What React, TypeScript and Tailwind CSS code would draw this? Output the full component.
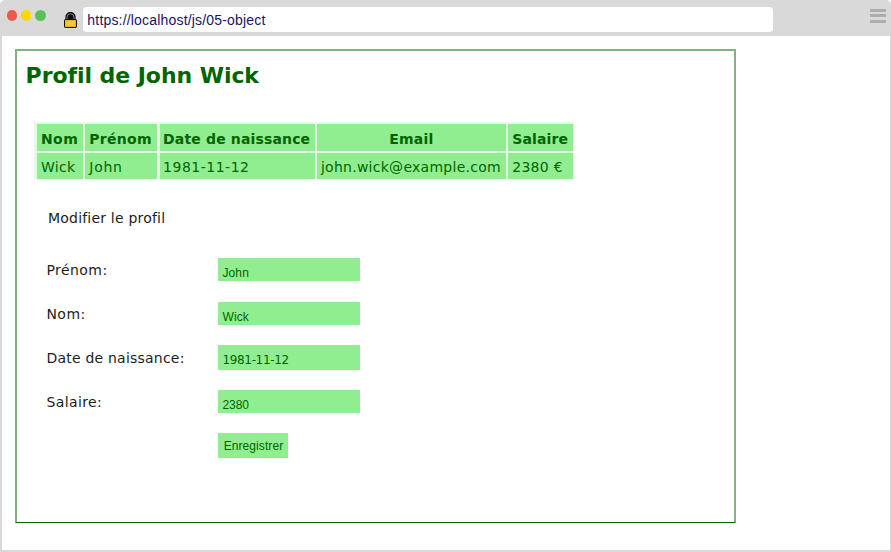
const verdana = "font-['DejaVu_Sans',Verdana,sans-serif]";
const arial = "font-['Liberation_Sans',Arial,sans-serif]";

const columns = [
  { head: 'Nom', value: 'Wick', headStyle: 'pl-[4px] tracking-[0.4px]', valueStyle: 'pl-[4px] tracking-[0.3px]' },
  { head: 'Prénom', value: 'John', headStyle: 'pl-[4px] tracking-[0.3px]', valueStyle: 'pl-[4px] tracking-[0.75px]' },
  { head: 'Date de naissance', value: '1981-11-12', headStyle: 'pl-[3.5px] tracking-[0.15px]', valueStyle: 'pl-[3.5px] tracking-[0.5px]' },
  { head: 'Email', value: 'john.wick@example.com', headStyle: 'text-center tracking-[0.2px]', valueStyle: 'pl-[4px] tracking-[0.27px]' },
  { head: 'Salaire', value: '2380 €', headStyle: 'pl-[4px] tracking-[0.15px]', valueStyle: 'pl-[4px] tracking-[0.3px]' },
];

const fields = [
  { label: 'Prénom:', value: 'John', box: 'h-[23px] pt-[7px] tracking-[0.1px]', row: 'h-11', text: 'tracking-[0.45px]', font: arial },
  { label: 'Nom:', value: 'Wick', box: 'h-[23px] pt-[7px] tracking-[0.1px]', row: 'h-[43px]', text: 'tracking-[0.5px]', font: arial },
  { label: 'Date de naissance:', value: '1981-11-12', box: 'h-[25px] pt-[7px] tracking-[-0.35px]', row: 'h-[45px]', text: 'pt-[3px] tracking-[0.22px]', font: verdana },
  { label: 'Salaire:', value: '2380', box: 'h-[23px] pt-[7px] tracking-[-0.05px]', row: 'h-[43px]', text: 'tracking-[0.4px]', font: arial },
];

function Lock() {
  return (
    <svg className="ml-[18px] mt-[12px] h-4 w-[13px] shrink-0" viewBox="0 0 13 16">
      <path d="M2 7.5V5a4.5 4.4 0 0 1 9 0v2.5" fill="#111" stroke="#000" strokeWidth="1.2" />
      <path d="M3 7V5.2a3.5 3.5 0 0 1 7 0V7" fill="none" stroke="#aaa" strokeWidth=".8" />
      <rect x=".6" y="7.6" width="11.8" height="7.8" rx=".5" fill="#ffc53a" stroke="#000" strokeWidth="1" />
    </svg>
  );
}

export default function App() {
  return (
    <div className="flex h-[552px] w-[891px] flex-col overflow-hidden rounded-t-[5px] bg-[#d9d9d9]">
      <header className="flex h-9 shrink-0 items-start">
        <div className="ml-[6.7px] mt-[10.3px] flex gap-[4px]">
          <span className="size-[10.4px] rounded-full bg-[#ed594a]" />
          <span className="size-[10.4px] rounded-full bg-[#fdd800]" />
          <span className="size-[10.4px] rounded-full bg-[#5ac05a]" />
        </div>
        <Lock />
        <div className={`ml-[6px] mt-[6.5px] h-[25px] w-[690.5px] rounded-[4px] bg-white pl-[4.5px] text-[14px] leading-[27px] tracking-[0.18px] text-[#1b1464] ${arial}`}>
          https://localhost/js/05-object
        </div>
        <div className="ml-auto mr-[5px] mt-[9px] flex w-4 flex-col gap-[2.3px]">
          <span className="h-[3px] bg-[#adadad]" />
          <span className="h-[3px] bg-[#adadad]" />
          <span className="h-[3px] bg-[#adadad]" />
        </div>
      </header>
      <main className={`mb-[2px] ml-[2px] mr-px flex-1 bg-white pl-[13px] pt-[13px] text-[14px] text-[#1c1c1c] ${verdana}`}>
        <section className="h-[474px] w-[721px] border-x-2 border-b border-t-2 border-x-[#7fb27f] border-b-[#006400] border-t-[#7fb27f]">
          <h1 className="ml-[8.6px] mt-[9px] h-8 whitespace-nowrap text-[22px] font-bold leading-8 tracking-[-0.06px] text-[#006400]">Profil de John Wick</h1>
          <div className="ml-[17px] mt-[30px] grid h-[58px] w-[540px] grid-cols-[46px_72px_155px_189px_65px] grid-rows-[27px_26px] gap-x-[2.3px] gap-y-[2px] bg-[#e2fbe2] py-[1.5px] pl-[3px] pr-[1px] text-[#006400]">
            {columns.map((c) => (
              <div key={c.head} className={`whitespace-nowrap bg-[#90ee90] font-bold leading-[31px] ${c.headStyle}`}>{c.head}</div>
            ))}
            {columns.map((c) => (
              <div key={c.value} className={`whitespace-nowrap bg-[#90ee90] leading-[28px] ${c.valueStyle}`}>{c.value}</div>
            ))}
          </div>
          <p className="ml-[31px] mt-[28px] h-5 leading-5 tracking-[0.2px]">Modifier le profil</p>
          <form className="ml-[29px] mt-[30px]">
            {fields.map((f) => (
              <div key={f.label} className={`flex items-start ${f.row}`}>
                <label className={`w-[172px] pt-[2px] pl-[0.4px] leading-5 ${f.text}`}>{f.label}</label>
                <div className={`w-[142px] bg-[#90ee90] pl-[4.5px] text-[12px] leading-[17px] text-[#006400] ${f.box} ${f.font}`}>{f.value}</div>
              </div>
            ))}
            <button type="button" className={`ml-[172px] h-[25px] w-[70px] bg-[#90ee90] pt-px pl-px text-[12px] leading-[25px] tracking-[0.08px] text-[#006400] ${arial}`}>Enregistrer</button>
          </form>
        </section>
      </main>
    </div>
  );
}
